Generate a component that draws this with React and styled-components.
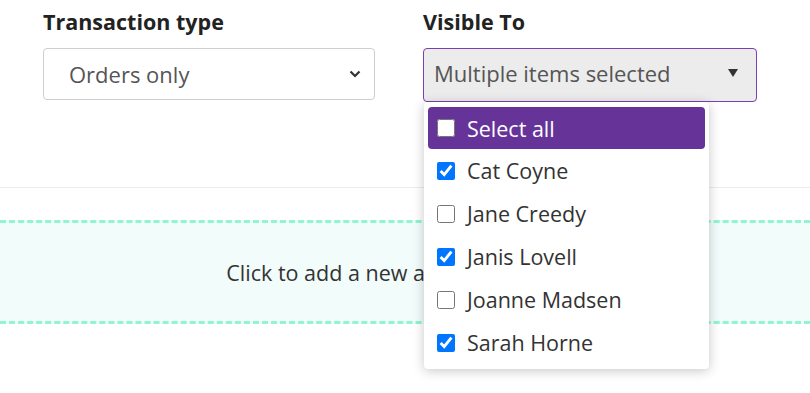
import React from "react";
import styled, { createGlobalStyle } from "styled-components";

const GlobalStyle = createGlobalStyle`
  body {
    margin: 0;
    background: #fff;
    font-family: "Open Sans", "Liberation Sans", sans-serif;
    color: #333;
  }
`;

const Page = styled.div`
  width: 810px;
  height: 393px;
  overflow: hidden;
  position: relative;
`;

const Header = styled.div`
  display: flex;
  gap: 48px;
  padding: 7px 0 0 43px;
  height: 180px;
  border-bottom: 1px solid #ececec;
`;

const Field = styled.div`
  display: flex;
  flex-direction: column;
  gap: 11px;
  width: ${(p) => p.width}px;
  position: relative;
`;

const Label = styled.div`
  font-size: 21.5px;
  line-height: 30px;
  font-weight: 700;
  color: #222;
`;

const SelectBox = styled.div`
  box-sizing: border-box;
  height: ${(p) => (p.open ? 54 : 52)}px;
  display: flex;
  align-items: center;
  justify-content: space-between;
  padding: ${(p) => (p.open ? "0 18px 4px 10px" : "0 12px 1px 25px")};
  border: 1px solid ${(p) => (p.open ? "#7b3fb3" : "#cfcfcf")};
  border-radius: 4px;
  background: ${(p) => (p.open ? "#ececec" : "#fff")};
  font-size: 22px;
  color: #555;
`;

const Menu = styled.div`
  position: absolute;
  top: 95px;
  left: 1px;
  width: 285px;
  box-sizing: border-box;
  padding: 5px 4px;
  background: #fff;
  border-radius: 4px;
  box-shadow: 0 2px 12px rgba(0, 0, 0, 0.22);
  z-index: 5;
`;

const Option = styled.label`
  display: flex;
  align-items: center;
  gap: 12px;
  height: ${(p) => (p.active ? 42 : 43)}px;
  padding-left: 9px;
  border-radius: 4px;
  background: ${(p) => (p.active ? "#663399" : "transparent")};
  color: ${(p) => (p.active ? "#fff" : "#333")};
  font-size: 21.5px;
`;

const Check = styled.input`
  width: 18px;
  height: 18px;
  margin: 0;
  accent-color: #0075ff;
`;

const AddZone = styled.div`
  margin-top: 32px;
  height: 98px;
  border-top: 3px dashed #8ff5d3;
  border-bottom: 3px dashed #8ff5d3;
  background: #f1fcfb;
  display: flex;
  align-items: center;
  justify-content: center;
  font-size: 21.5px;
  color: #333;
`;

const people = [
  { name: "Cat Coyne", on: true },
  { name: "Jane Creedy", on: false },
  { name: "Janis Lovell", on: true },
  { name: "Joanne Madsen", on: false },
  { name: "Sarah Horne", on: true },
];

export default function App() {
  return (
    <Page>
      <GlobalStyle />
      <Header>
        <Field width={332}>
          <Label>Transaction type</Label>
          <SelectBox>
            <span>Orders only</span>
            <svg width="14" height="14" viewBox="0 0 14 14">
              <path d="M2.5 4.5 L7 9 L11.5 4.5" fill="none" stroke="#333" strokeWidth="2.2" />
            </svg>
          </SelectBox>
        </Field>
        <Field width={334}>
          <Label>Visible To</Label>
          <SelectBox open>
            <span>Multiple items selected</span>
            <svg width="10" height="8" viewBox="0 0 10 8">
              <path d="M0 0 H10 L5 8 Z" fill="#333" />
            </svg>
          </SelectBox>
          <Menu>
            <Option active>
              <Check type="checkbox" readOnly checked={false} />
              Select all
            </Option>
            {people.map((p) => (
              <Option key={p.name}>
                <Check type="checkbox" readOnly checked={p.on} />
                {p.name}
              </Option>
            ))}
          </Menu>
        </Field>
      </Header>
      <AddZone>Click to add a new allocation setting</AddZone>
    </Page>
  );
}
